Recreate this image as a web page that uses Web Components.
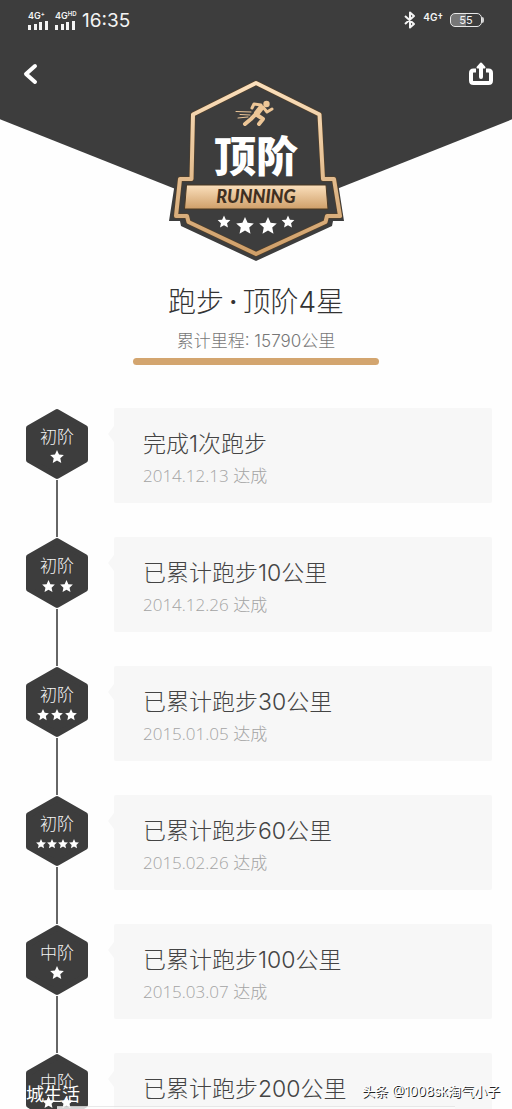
<!DOCTYPE html>
<html lang="zh-CN">
<head>
<meta charset="UTF-8">
<meta name="viewport" content="width=device-width, initial-scale=1">
<title>跑步等级</title>
<style>
    body {
        margin: 0;
        background: #fefefe;
        font-family: Inter, "Noto Sans CJK SC", sans-serif;
        font-weight: 300;
        --dark: #3d3d3d;
        --gold: #d3a56f;
        --panel: #f7f7f7;
    }
</style>
</head>
<body>

<level-page>
    <status-bar slot="status" time="16:35" battery="55"></status-bar>
    <level-badge slot="badge" name="顶阶" label="RUNNING"></level-badge>
    <level-summary slot="summary" sport="跑步" rank="顶阶4星" total="累计里程: 15790公里"></level-summary>
    <level-step level="初阶" stars="1" date="2014.12.13 达成">完成1次跑步</level-step>
    <level-step level="初阶" stars="2" date="2014.12.26 达成">已累计跑步10公里</level-step>
    <level-step level="初阶" stars="3" date="2015.01.05 达成">已累计跑步30公里</level-step>
    <level-step level="初阶" stars="4" date="2015.02.26 达成">已累计跑步60公里</level-step>
    <level-step level="中阶" stars="1" date="2015.03.07 达成">已累计跑步100公里</level-step>
    <level-step level="中阶" stars="2" date="">已累计跑步200公里</level-step>
    <photo-credit slot="credit" place="城生活" author="头条 @1008sk淘气小子"></photo-credit>
</level-page>

<script>
const STAR = 'M0 -10 L2.9 -3.6 L9.8 -2.9 L4.7 1.8 L6.1 8.6 L0 5.1 L-6.1 8.6 L-4.7 1.8 L-9.8 -2.9 L-2.9 -3.6 Z';

class BaseElement extends HTMLElement {

    constructor() {
        super();
        this.attachShadow({ mode: "open" });
    }

    connectedCallback() {
        this.shadowRoot.innerHTML = `
            ${this.templateCss()}
            ${this.template()}
        `;
    }

    attr(name) {
        return this.getAttribute(name) || "";
    }
}

customElements.define('level-page', class LevelPage extends BaseElement {

    templateCss() {
        return /*html*/`
            <style>
                :host {
                    display: block;
                    position: relative;
                    height: 100vh;
                    overflow: hidden;
                }

                .hero {
                    position: relative;
                    isolation: isolate;
                }

                /* dark pennant behind the badge */
                .hero::before {
                    content: "";
                    position: absolute;
                    z-index: -1;
                    inset: 0 0 auto;
                    height: 221px;
                    background: var(--dark);
                    clip-path: polygon(0 0, 100% 0, 100% 54%, 50% 100%, 0 54%);
                }

                nav {
                    display: grid;
                    grid-template-columns: 48px 1fr 48px;
                    align-items: start;
                    justify-items: center;
                    padding: 10px 7px 0;
                }

                button {
                    display: flex;
                    align-items: center;
                    justify-content: center;
                    width: 48px;
                    height: 48px;
                    padding: 0;
                    border: 0;
                    background: none;
                    cursor: pointer;
                }

                .badge {
                    margin-top: 20px;
                }

                .steps {
                    padding: 43px 20px 0 26px;
                }
            </style>
        `;
    }

    template() {
        return /*html*/`
            <header class="hero">
                <slot name="status"></slot>
                <nav>
                    <button type="button" aria-label="返回">
                        <svg width="24" height="24" viewBox="0 0 24 24" fill="none" stroke="#fff" stroke-width="4" stroke-linecap="round" stroke-linejoin="round">
                            <path d="M16 4 L7 12 L16 20"/>
                        </svg>
                    </button>
                    <div class="badge"><slot name="badge"></slot></div>
                    <button type="button" aria-label="分享">
                        <svg width="26" height="26" viewBox="0 0 26 26" fill="none" stroke="#fff" stroke-width="4" stroke-linejoin="round">
                            <path d="M8 9.500H5.500Q3 9.500 3 12V19.500Q3 22 5.500 22H20.500Q23 22 23 19.500V12Q23 9.500 20.500 9.500H18"/>
                            <path d="M13 16V6" stroke-linecap="round"/>
                            <path d="M9.500 6.500L13 2.500L16.500 6.500Z" fill="#fff" stroke-width="2"/>
                        </svg>
                    </button>
                </nav>
            </header>
            <slot name="summary"></slot>
            <main class="steps"><slot></slot></main>
            <slot name="credit"></slot>
        `;
    }
})

customElements.define('status-bar', class StatusBar extends BaseElement {

    templateCss() {
        return /*html*/`
            <style>
                :host {
                    display: flex;
                    align-items: center;
                    justify-content: space-between;
                    height: 40px;
                    padding: 0 28px;
                    color: #f4f4f4;
                    font-weight: 400;
                }

                .group {
                    display: flex;
                    align-items: center;
                    gap: 7px;
                }

                .signal {
                    display: flex;
                    flex-direction: column;
                    gap: 1px;
                    width: 20px;
                    font-size: 9px;
                    line-height: 9px;
                    font-weight: 600;
                }

                .signal span {
                    display: flex;
                }

                .signal small {
                    font-size: 6px;
                    line-height: 6px;
                }

                .time {
                    font-size: 19px;
                    line-height: 24px;
                    padding-top: 2px;
                }

                .net {
                    font-size: 10px;
                    line-height: 12px;
                    font-weight: 600;
                    padding-bottom: 6px;
                }

                .battery {
                    display: flex;
                    align-items: center;
                }

                .cell {
                    box-sizing: border-box;
                    width: 32px;
                    height: 14px;
                    border: 1px solid #e8e8e8;
                    border-radius: 5px;
                    background: linear-gradient(90deg, #777 50%, transparent 50%);
                    font-size: 11px;
                    line-height: 12px;
                    text-align: center;
                }

                .tip {
                    width: 2px;
                    height: 6px;
                    border-radius: 0 2px 2px 0;
                    background: #d0d0d0;
                }
            </style>
        `;
    }

    template() {
        const bars = `
            <svg width="20" height="9" viewBox="0 0 20 9" fill="#f4f4f4">
                <rect x="0" y="4" width="3" height="5"/><rect x="6" y="3" width="3" height="6"/>
                <rect x="11" y="1" width="3" height="8"/><rect x="17" y="0" width="3" height="9"/>
            </svg>`;
        return /*html*/`
            <div class="group">
                <div class="signal"><span>4G<small>+</small></span>${bars}</div>
                <div class="signal"><span>4G<small>HD</small></span>${bars}</div>
                <div class="time">${this.attr('time')}</div>
            </div>
            <div class="group">
                <svg width="12" height="18" viewBox="0 0 12 18" fill="none" stroke="#f4f4f4" stroke-width="2" stroke-linejoin="round">
                    <path d="M1 5 L10 13 L6 16.500 V1.500 L10 5 L1 13"/>
                </svg>
                <div class="net">4G†</div>
                <div class="battery">
                    <div class="cell">${this.attr('battery')}</div>
                    <div class="tip"></div>
                </div>
            </div>
        `;
    }
})

customElements.define('level-badge', class LevelBadge extends BaseElement {

    templateCss() {
        return /*html*/`
            <style>
                :host {
                    display: block;
                }

                svg {
                    display: block;
                }

                .name {
                    font: 900 42px "Noto Sans CJK SC", sans-serif;
                }

                .label {
                    font: italic 900 18px Lato, sans-serif;
                }
            </style>
        `;
    }

    template() {
        return /*html*/`
            <svg width="190" height="200" viewBox="1 0 190 200">
                <defs>
                    <linearGradient id="gold" x1="0" y1="0" x2="0" y2="1">
                        <stop offset="0" stop-color="#fbe0bd"/>
                        <stop offset="1" stop-color="#cf9f69"/>
                    </linearGradient>
                </defs>
                <path fill="#3d3d3d" d="M96 9 L162 42 L165 106 H177 L184 151 H173 L172 156 L96 191 L21 156 L20 151 H9 L16 106 H28 L30 42 Z"/>
                <path fill="none" stroke="#5a4225" stroke-width="5" stroke-linejoin="round" d="M96 13 L159.500 44.500 L163 109 H174 L180 146 H167 L165.500 152 L96 184 L28.500 152 L27 146 H16 L20 109 H31.500 L33 44.500 Z"/>
                <path fill="none" stroke="url(#gold)" stroke-width="4" stroke-linejoin="round" d="M96 13 L159.500 44.500 L163 109 H174 L180 146 H167 L165.500 152 L96 184 L28.500 152 L27 146 H16 L20 109 H31.500 L33 44.500 Z"/>
                <path fill="url(#gold)" stroke="#4a3823" stroke-width="1" d="M26.500 115 H166 L168 139 H24.500 Z"/>
                <g fill="none" stroke="#edc697" stroke-linecap="round" stroke-linejoin="round">
                    <circle cx="106.500" cy="34" r="3.200" fill="#edc697" stroke="none"/>
                    <path stroke-width="3" d="M92 38 L94 34 L101 35 M103 37 L107 42 L112 39"/>
                    <path stroke-width="6" d="M101 38 L97 43"/>
                    <path stroke-width="4" d="M96 44 L91 49 L85 54 M97 45 L103 49 L99 54"/>
                    <path stroke-width="1" d="M76 41.500 L91 42 M80 44.500 L90 45 M78 48 L88 47"/>
                </g>
                <text class="name" x="96" y="102" text-anchor="middle" fill="#fff">${this.attr('name')}</text>
                <text class="label" x="96" y="133" text-anchor="middle" fill="#3f3022">${this.attr('label')}</text>
                <g fill="#fff">
                    <path transform="translate(64 152) scale(.65)" d="${STAR}"/>
                    <path transform="translate(85 156) scale(.9)" d="${STAR}"/>
                    <path transform="translate(108 156) scale(.9)" d="${STAR}"/>
                    <path transform="translate(128 152) scale(.65)" d="${STAR}"/>
                </g>
            </svg>
        `;
    }
})

customElements.define('level-summary', class LevelSummary extends BaseElement {

    templateCss() {
        return /*html*/`
            <style>
                :host {
                    display: flex;
                    flex-direction: column;
                    align-items: center;
                    padding-top: 12px;
                    text-align: center;
                }

                h1 {
                    margin: 0;
                    color: #333;
                    font-size: 28px;
                    line-height: 40px;
                    font-weight: 300;
                }

                .dot {
                    margin: 0 5px;
                    font-weight: 500;
                }

                p {
                    margin: 7px 0 5px;
                    color: #777;
                    font-size: 17px;
                    line-height: 24px;
                }

                .bar {
                    width: 48%;
                    height: 7px;
                    border-radius: 4px;
                    background: var(--gold);
                }
            </style>
        `;
    }

    template() {
        return /*html*/`
            <h1>${this.attr('sport')}<span class="dot">·</span>${this.attr('rank')}</h1>
            <p>${this.attr('total')}</p>
            <div class="bar"></div>
        `;
    }
})

customElements.define('level-step', class LevelStep extends BaseElement {

    templateCss() {
        return /*html*/`
            <style>
                :host {
                    display: flex;
                }

                .rail {
                    display: flex;
                    flex-direction: column;
                    align-items: center;
                    width: 62px;
                }

                .hex {
                    display: grid;
                    width: 62px;
                    height: 72px;
                }

                .hex > * {
                    grid-area: 1 / 1;
                }

                .face {
                    display: flex;
                    flex-direction: column;
                    align-items: center;
                    padding-top: 18px;
                    color: #f4f4f4;
                    font-size: 17px;
                    line-height: 22px;
                }

                .stars {
                    display: flex;
                    align-items: center;
                    height: 18px;
                }

                .stars.n2 { gap: 5px; }
                .stars.n3 { gap: 2px; }
                .stars.n4 { gap: 1px; }

                .line {
                    flex: 1;
                    width: 2px;
                    background: #666;
                }

                .arrow {
                    margin: 18px 0 0 20px;
                    flex: none;
                }

                .card {
                    flex: 1;
                    margin-bottom: 34px;
                    padding: 20px 29px 15px;
                    border-radius: 2px;
                    background: var(--panel);
                }

                h2 {
                    margin: 0 0 4px;
                    color: #444;
                    font-size: 23px;
                    line-height: 32px;
                    font-weight: 300;
                }

                time {
                    display: block;
                    min-height: 24px;
                    color: #a4a4a4;
                    font-family: "Open Sans", "Noto Sans CJK SC", sans-serif;
                    font-size: 17px;
                    line-height: 24px;
                }
            </style>
        `;
    }

    template() {
        const count = Number(this.attr('stars'));
        const size = [0, 14, 13, 12, 10][count];
        const star = `<svg width="${size}" height="${size}" viewBox="-10 -10 20 20" fill="#fff"><path d="${STAR}"/></svg>`;
        return /*html*/`
            <div class="rail">
                <div class="hex">
                    <svg width="62" height="72" viewBox="0 0 62 72">
                        <path fill="#3d3d3d" stroke="#3d3d3d" stroke-width="6" stroke-linejoin="round" d="M31 4 L59 20 V52 L31 68 L3 52 V20 Z"/>
                    </svg>
                    <div class="face">
                        <span>${this.attr('level')}</span>
                        <div class="stars n${count}">${star.repeat(count)}</div>
                    </div>
                </div>
                <div class="line"></div>
            </div>
            <svg class="arrow" width="6" height="16" viewBox="0 0 6 16"><path fill="#f7f7f7" d="M6 0 L0 8 L6 16 Z"/></svg>
            <div class="card">
                <h2><slot></slot></h2>
                <time>${this.attr('date')}</time>
            </div>
        `;
    }
})

customElements.define('photo-credit', class PhotoCredit extends BaseElement {

    templateCss() {
        return /*html*/`
            <style>
                :host {
                    position: absolute;
                    inset: auto 0 0;
                }

                .names {
                    display: flex;
                    align-items: flex-end;
                    justify-content: space-between;
                    padding: 0 12px 0 26px;
                    color: #fff;
                    font-weight: 400;
                }

                .place {
                    font-size: 18px;
                    line-height: 22px;
                }

                .author {
                    padding-bottom: 5px;
                    font-size: 13px;
                    line-height: 20px;
                    text-shadow: 1px 1px 0 #222;
                }

                .edge {
                    height: 2px;
                    margin: 0 57px;
                    border-top: 1px solid #e4e4e4;
                    background: #fdfdfd;
                    opacity: .8;
                }
            </style>
        `;
    }

    template() {
        return /*html*/`
            <div class="names">
                <span class="place">${this.attr('place')}</span>
                <span class="author">${this.attr('author')}</span>
            </div>
            <div class="edge"></div>
        `;
    }
})
</script>
</body>
</html>
